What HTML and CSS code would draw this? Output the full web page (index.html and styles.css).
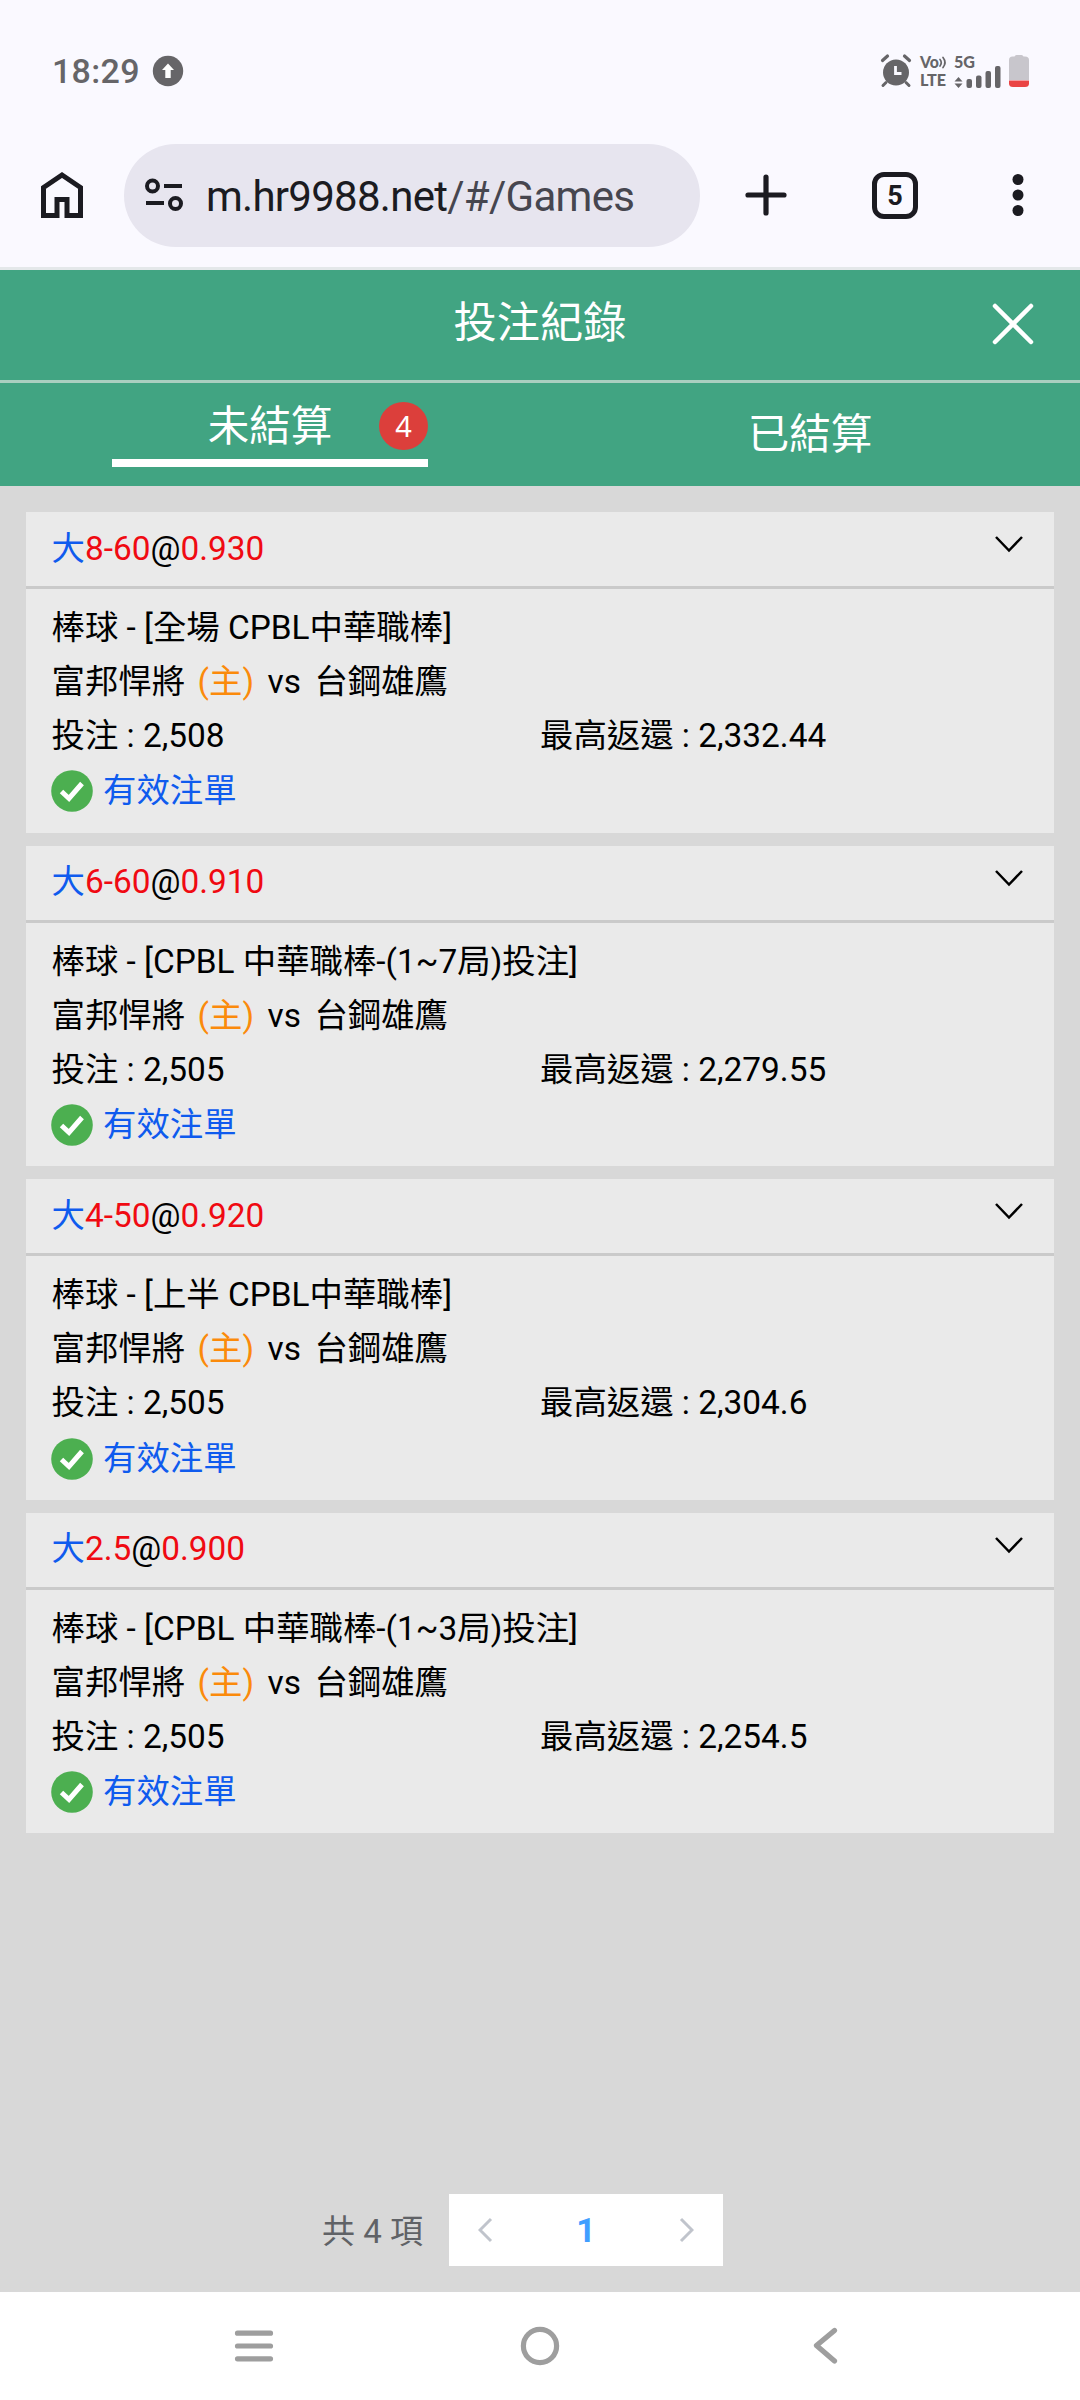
FILE: index.html
```html
<!DOCTYPE html>
<html lang="zh-Hant">
<head>
<meta charset="utf-8">
<title>投注紀錄</title>
<link rel="stylesheet" href="styles.css">
</head>
<body>
<div class="screen">
  <div class="status">
    <span class="clock">18:29</span>
    <svg class="upload" width="32" height="32" viewBox="0 0 32 32"><circle cx="16" cy="16" r="15.2" fill="#666568"/><path d="M16 8.500l6 6.500h-3.300v8h-5.400v-8H10z" fill="#fff"/></svg>
    <svg class="signals" width="152" height="36" viewBox="0 0 152 36">
      <g fill="none" stroke="#666568" stroke-linecap="round">
        <circle cx="16" cy="19.500" r="13" fill="#666568" stroke="none"/>
        <path d="M2.500 7.500l5-4.500M29.500 7.500l-5-4.500" stroke-width="3.200"/>
        <path d="M6 29.500l-3 3M26 29.500l3 3" stroke-width="3"/>
        <path d="M15.500 13v7.500h6" stroke="#faf9ff" stroke-width="2.800" stroke-linecap="butt"/>
        <path d="M60 6.500q2.500 3 0 6.500M63 4.500q4 5 0 10" stroke-width="1.700"/>
      </g>
      <g class="netlabel" fill="#666568">
        <text x="40" y="15" textLength="19" lengthAdjust="spacingAndGlyphs">Vo</text>
        <text x="40" y="33" textLength="26" lengthAdjust="spacingAndGlyphs">LTE</text>
        <text x="74" y="15" textLength="21" lengthAdjust="spacingAndGlyphs">5G</text>
        <path d="M78.500 24l4 4.500h-8zM78.500 35l4-4.500h-8z"/>
        <rect x="86.500" y="26" width="5.500" height="9" rx="2"/>
        <rect x="96" y="22.500" width="5.500" height="12.500" rx="2"/>
        <rect x="105.500" y="18" width="5.500" height="17" rx="2"/>
        <rect x="115" y="13" width="5.500" height="22" rx="2"/>
      </g>
      <path d="M129 7q0-3.500 3.500-3.500h2q.5-1.500 2-1.500h5q1.500 0 2 1.500h1.500q4 0 4 3.500v20H129z" fill="#c8c6cc"/>
      <path d="M129 27.500h20v3q0 3.500-4 3.500h-12q-4 0-4-3.500z" fill="#ea4444"/>
    </svg>
  </div>
  <div class="toolbar">
    <svg class="home" width="44" height="48" viewBox="0 0 44 48"><path d="M3.500 44.500V16.500L22 4l18.500 12.500v28H27V28.500H17v16z" fill="none" stroke="#1b1b21" stroke-width="5"/></svg>
    <div class="address">
      <svg class="tune" width="40" height="34" viewBox="0 0 40 34"><g fill="none" stroke="#1b1b21" stroke-width="4"><circle cx="8.500" cy="8" r="5.500"/><circle cx="31.500" cy="25.500" r="5.500"/><path d="M20 8h18M2 25h18"/></g></svg>
      <span class="url">m.hr9988.net<span class="path">/#/Games</span></span>
    </div>
    <svg class="plus" width="42" height="42" viewBox="0 0 42 42"><path d="M21 3v36M3 21h36" stroke="#1b1b21" stroke-width="5.200" stroke-linecap="round"/></svg>
    <div class="tabcount">5</div>
    <svg class="dots" width="12" height="44" viewBox="0 0 12 44"><g fill="#1b1b21"><circle cx="6" cy="6.500" r="5.500"/><circle cx="6" cy="22" r="5.500"/><circle cx="6" cy="37.500" r="5.500"/></g></svg>
  </div>
  <header class="title">
    <h1>投注紀錄</h1>
    <svg class="close" width="44" height="44" viewBox="0 0 44 44"><path d="M4 4l36 36M40 4L4 40" stroke="#fff" stroke-width="4.500" stroke-linecap="round"/></svg>
  </header>
  <nav class="tabs">
    <div class="tab"><div class="active"><span>未結算</span><b class="badge">4</b></div></div>
    <div class="tab"><span>已結算</span></div>
  </nav>
  <main class="list">
    <section class="card">
      <div class="head"><div><span class="blue">大</span><span class="red">8-60</span>@<span class="red">0.930</span></div><svg class="chev" width="30" height="18" viewBox="0 0 30 18"><path d="M2 2l13 13.500L28 2"/></svg></div>
      <div class="body">
        <p>棒球 - [全場 CPBL中華職棒]</p>
        <p>富邦悍將<span class="host">(主)</span>vs<span class="away">台鋼雄鷹</span></p>
        <p class="cols"><span>投注 : 2,508</span><span>最高返還 : 2,332.44</span></p>
        <p class="state"><svg width="42" height="42" viewBox="0 0 42 42"><circle cx="21" cy="21" r="20.800" fill="#4caf50"/><path d="M10.500 21.500l7.500 7 13-15" fill="none" stroke="#fff" stroke-width="5"/></svg><span class="blue">有效注單</span></p>
      </div>
    </section>
    <section class="card">
      <div class="head"><div><span class="blue">大</span><span class="red">6-60</span>@<span class="red">0.910</span></div><svg class="chev" width="30" height="18" viewBox="0 0 30 18"><path d="M2 2l13 13.500L28 2"/></svg></div>
      <div class="body">
        <p>棒球 - [CPBL 中華職棒-(1~7局)投注]</p>
        <p>富邦悍將<span class="host">(主)</span>vs<span class="away">台鋼雄鷹</span></p>
        <p class="cols"><span>投注 : 2,505</span><span>最高返還 : 2,279.55</span></p>
        <p class="state"><svg width="42" height="42" viewBox="0 0 42 42"><circle cx="21" cy="21" r="20.800" fill="#4caf50"/><path d="M10.500 21.500l7.500 7 13-15" fill="none" stroke="#fff" stroke-width="5"/></svg><span class="blue">有效注單</span></p>
      </div>
    </section>
    <section class="card">
      <div class="head"><div><span class="blue">大</span><span class="red">4-50</span>@<span class="red">0.920</span></div><svg class="chev" width="30" height="18" viewBox="0 0 30 18"><path d="M2 2l13 13.500L28 2"/></svg></div>
      <div class="body">
        <p>棒球 - [上半 CPBL中華職棒]</p>
        <p>富邦悍將<span class="host">(主)</span>vs<span class="away">台鋼雄鷹</span></p>
        <p class="cols"><span>投注 : 2,505</span><span>最高返還 : 2,304.6</span></p>
        <p class="state"><svg width="42" height="42" viewBox="0 0 42 42"><circle cx="21" cy="21" r="20.800" fill="#4caf50"/><path d="M10.500 21.500l7.500 7 13-15" fill="none" stroke="#fff" stroke-width="5"/></svg><span class="blue">有效注單</span></p>
      </div>
    </section>
    <section class="card">
      <div class="head"><div><span class="blue">大</span><span class="red">2.5</span>@<span class="red">0.900</span></div><svg class="chev" width="30" height="18" viewBox="0 0 30 18"><path d="M2 2l13 13.500L28 2"/></svg></div>
      <div class="body">
        <p>棒球 - [CPBL 中華職棒-(1~3局)投注]</p>
        <p>富邦悍將<span class="host">(主)</span>vs<span class="away">台鋼雄鷹</span></p>
        <p class="cols"><span>投注 : 2,505</span><span>最高返還 : 2,254.5</span></p>
        <p class="state"><svg width="42" height="42" viewBox="0 0 42 42"><circle cx="21" cy="21" r="20.800" fill="#4caf50"/><path d="M10.500 21.500l7.500 7 13-15" fill="none" stroke="#fff" stroke-width="5"/></svg><span class="blue">有效注單</span></p>
      </div>
    </section>
  </main>
  <div class="pager">
    <span class="total">共 4 項</span>
    <div class="pages">
      <svg width="16" height="26" viewBox="0 0 16 26"><path d="M13 2L2 13l11 11"/></svg>
      <b>1</b>
      <svg width="16" height="26" viewBox="0 0 16 26"><path d="M3 2l11 11L3 24"/></svg>
    </div>
  </div>
  <footer class="sysnav">
    <svg width="42" height="42" viewBox="0 0 42 42"><path d="M4.500 8.200h33M4.500 21h33M4.500 33.800h33"/></svg>
    <svg width="42" height="42" viewBox="0 0 42 42"><circle cx="21" cy="21" r="16.600"/></svg>
    <svg width="42" height="42" viewBox="0 0 42 42"><path d="M29.500 5.500L11.500 20.500l18 15.500"/></svg>
  </footer>
</div>
</body>
</html>
```
FILE: styles.css
```css
* { box-sizing: border-box; margin: 0; padding: 0; }
body { background: #fff; font-family: Roboto, "Noto Sans CJK TC", sans-serif; color: #000; }
svg { display: block; flex: none; }
.screen { width: 1080px; height: 2400px; display: flex; flex-direction: column; overflow: hidden; background: #faf9ff; }
.status { height: 142px; padding: 0 48.500px 0 52px; display: flex; align-items: center; color: #666568; }
.clock { font-size: 34px; line-height: 40px; letter-spacing: .3px; font-weight: 500; }
.upload { margin-left: 12px; }
.signals { margin-left: auto; }
.netlabel { font: 900 16.500px Lato, sans-serif; }
.toolbar { height: 128px; padding: 2px 56px 21px 40px; display: flex; align-items: center; border-bottom: 3px solid #e4e8ea; }
.address { width: 576px; height: 103px; margin-left: 39.500px; padding-left: 20.500px; border-radius: 52px; background: #e7e5ef; display: flex; align-items: center; }
.url { margin-left: 22px; padding-top: 3px; font-size: 42px; line-height: 50px; letter-spacing: -.73px; color: #1b1b21; }
.path { color: #46464f; }
.plus { margin-left: 45.500px; }
.tabcount { width: 46px; height: 47px; margin-left: 85px; border: 5px solid #1b1b21; border-radius: 12px; font: 700 27px/38px Roboto, sans-serif; text-align: center; color: #1b1b21; }
.dots { margin-left: auto; }
.title { height: 113px; padding: 0 45px 2px 89px; background: #41a482; border-bottom: 3px solid #a9cfc0; display: flex; align-items: center; color: #fff; }
.title h1 { flex: 1; text-align: center; font-size: 43.2px; line-height: 60px; font-weight: 400; }
.tabs { height: 103px; background: #41a482; color: #fff; display: flex; font-size: 41.5px; line-height: 60px; }
.tab { flex: 1; display: flex; justify-content: center; align-items: center; }
.active { width: 316px; height: 66px; margin-bottom: 2px; border-bottom: 8px solid #fff; position: relative; text-align: center; line-height: 52px; }
.badge { position: absolute; right: 0; top: 1.500px; width: 49px; height: 48px; border-radius: 50%; background: #dc3f3b; font: 400 29px/48px "Noto Sans", sans-serif; text-align: center; }
.list { flex: 1; background: #d8d8d8; padding: 26px 26px 0 26px; display: flex; flex-direction: column; gap: 13.170px; }
.card { height: 320.5px; background: #eaeaea; font-size: 33.4px; line-height: 54px; }
.head { height: 77px; border-bottom: 3px solid #cacaca; padding: 0 30px 0 25.500px; display: flex; justify-content: space-between; }
.head > div { padding-top: 9.500px; }
.chev { margin-top: 23px; fill: none; stroke: #000; stroke-width: 2.500; }
.blue { color: #0f5bee; }
.red { color: #f00a12; }
.body { padding: 12px 25.500px; }
.host { color: #fb8a0b; margin: 0 13.500px 0 12.500px; }
.away { margin-left: 13.500px; }
.cols { display: flex; }
.cols span { flex: 0 0 488.500px; }
.state { display: flex; align-items: center; gap: 10.500px; margin-left: -1px; padding-top: 1.200px; }
.pager { height: 134px; background: #d8d8d8; padding: 36px 0 26px 322px; display: flex; align-items: center; }
.total { width: 127px; padding-bottom: 3px; font-size: 33px; color: #606266; }
.pages { width: 274px; height: 72px; background: #fff; padding: 0 29px; display: flex; justify-content: space-between; align-items: center; }
.pages svg { fill: none; stroke: #c0c4cc; stroke-width: 3; }
.pages b { font-size: 34px; color: #409eff; }
.sysnav { height: 108px; background: #fff; padding: 0 233px; display: flex; justify-content: space-between; align-items: center; }
.sysnav svg { fill: none; stroke: #9e9e9e; stroke-width: 5.200; stroke-linecap: round; stroke-linejoin: round; }
```
